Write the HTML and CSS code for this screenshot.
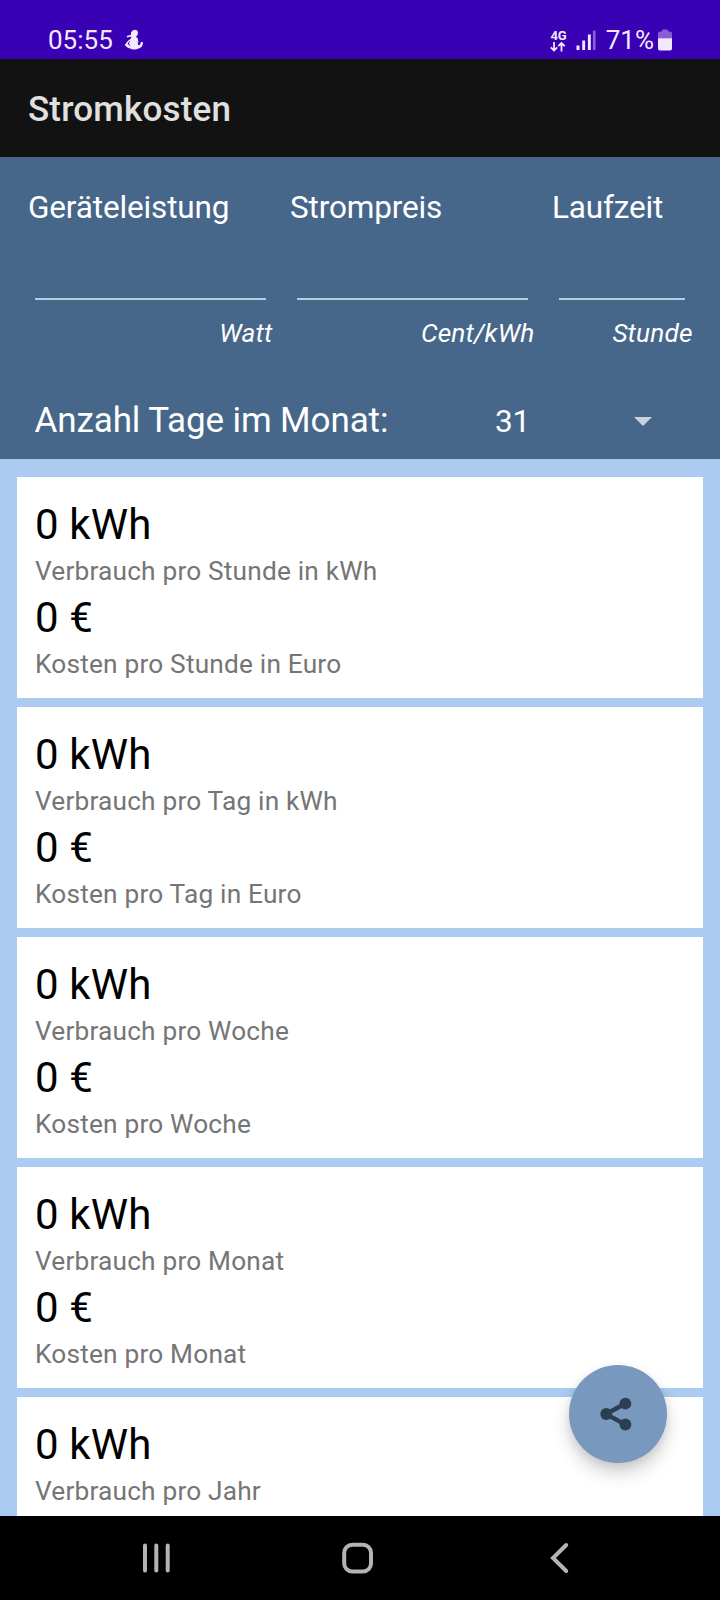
FILE: index.html
```html
<!DOCTYPE html>
<html lang="de">
<head>
<meta charset="utf-8">
<title>Stromkosten</title>
<link rel="stylesheet" href="styles.css">
</head>
<body>
<div class="screen">
  <div class="status">
    <span class="clock">05:55</span>
    <svg class="notify" width="20" height="22" viewBox="0 0 20 22"><path d="M7 3.500Q8 .8 11 .8q3 .2 3 3.300 0 2.700-2 3.700 2.500 1.500 2.300 4.200 0 2-.6 3 .3 1.500 1.500 1.300 1.400-.5 1.600-3.300h2.100c.2 4-2 6.200-4.500 6.500-2 1.400-6.500 1.400-8 0C4.500 19.500 2.500 18.300.7 15.800 3 13.500 3.500 11.500 6.500 10l1-2.600-4.500 1L2.700 7 7 5.700z"/><path class="gap" d="M5.500 12.500 4.200 15l2 1.500"/></svg>
    <span class="net"><span>4G</span><svg width="16" height="10" viewBox="0 0 16 10"><path d="M4 0v8.500M.8 5.400 4 8.600 7.200 5.400M11.500 9.600V1M8.300 4.200 11.500 1l3.200 3.200"/></svg></span>
    <svg class="signal" width="20" height="20" viewBox="0 0 20 20"><path d="M.5 15.500h3V20h-3zM6.200 10.500h2.900V20H6.200zM11.900 4.500h2.900V20h-2.900z"/><path class="dim" d="M16.900.5h2.700V20h-2.700z"/></svg>
    <span class="percent">71%</span>
    <svg class="battery" width="14" height="22" viewBox="0 0 14 22"><path class="dim" d="M4 2.500V1.500Q4 .5 5 .5h4q1 0 1 1v1h2q2 0 2 2V9.500H0V4.500q0-2 2-2z"/><path d="M0 9.300h14V19.500q0 2-2 2H2q-2 0-2-2z"/></svg>
  </div>
  <header class="appbar">Stromkosten</header>
  <section class="panel">
    <div class="fields">
      <label class="field"><span>Geräteleistung</span><input class="entry"><em>Watt</em></label>
      <label class="field"><span>Strompreis</span><input class="entry"><em>Cent/kWh</em></label>
      <label class="field"><span>Laufzeit</span><input class="entry"><em>Stunde</em></label>
    </div>
    <div class="days">
      <span class="days-label">Anzahl Tage im Monat:</span>
      <span class="days-value">31</span>
      <svg width="18" height="10" viewBox="0 0 18 10"><path d="M0 0h18L9 9z"/></svg>
    </div>
  </section>
  <main class="list">
    <article class="card"><p class="value">0 kWh</p><p class="label">Verbrauch pro Stunde in kWh</p><p class="value">0 €</p><p class="label">Kosten pro Stunde in Euro</p></article>
    <article class="card"><p class="value">0 kWh</p><p class="label">Verbrauch pro Tag in kWh</p><p class="value">0 €</p><p class="label">Kosten pro Tag in Euro</p></article>
    <article class="card"><p class="value">0 kWh</p><p class="label">Verbrauch pro Woche</p><p class="value">0 €</p><p class="label">Kosten pro Woche</p></article>
    <article class="card"><p class="value">0 kWh</p><p class="label">Verbrauch pro Monat</p><p class="value">0 €</p><p class="label">Kosten pro Monat</p></article>
    <article class="card"><p class="value">0 kWh</p><p class="label">Verbrauch pro Jahr</p></article>
    <button class="fab" aria-label="Teilen"><svg width="42" height="42" viewBox="0 0 42 42"><path d="M28.400 10.600 9 21l19.400 10.600"/><circle cx="9.200" cy="21" r="5.900"/><circle cx="28.400" cy="10.600" r="5.900"/><circle cx="28.400" cy="31.500" r="5.900"/></svg></button>
  </main>
  <nav class="nav">
    <svg width="30" height="32" viewBox="0 0 30 32"><path d="M4 3.500v25M15.300 3.500v25M26.700 3.500v25"/></svg>
    <svg width="34" height="34" viewBox="0 0 34 34"><rect x="3.200" y="3.700" width="26.800" height="26.800" rx="8"/></svg>
    <svg width="20" height="32" viewBox="0 0 20 32"><path d="M16.200 3 3 16l13.200 13"/></svg>
  </nav>
</div>
</body>
</html>
```
FILE: styles.css
```css
* { box-sizing: border-box; }
body { margin: 0; font-family: Roboto, "Noto Sans", sans-serif; }
p { margin: 0; }
.screen { width: 720px; height: 1600px; display: flex; flex-direction: column; overflow: hidden; }

.status { height: 58.500px; flex: none; background: #3a00b3; color: #f3e8ff; display: flex; align-items: flex-start; padding: 0 48px; }
.status svg { fill: #f3e8ff; }
.status .dim { fill: #8a5cd6; }
.status .gap { fill: none; stroke: #3a00b3; stroke-width: 1; }
.clock, .percent { font-size: 26px; line-height: 30px; margin-top: 25px; }
.notify { margin: 29px 0 0 11px; }
.net { margin: 29px 0 0 auto; display: flex; flex-direction: column; font-size: 13px; font-weight: 700; line-height: 13px; }
.net svg { fill: none; stroke: #f3e8ff; stroke-width: 1.8; }
.signal { margin: 30px 0 0 9px; }
.percent { margin-left: 10px; }
.battery { margin: 29px 0 0 4px; }

.appbar { height: 98px; flex: none; background: #121212; color: #e0e0e0; font-size: 35px; font-weight: 500; line-height: 102px; letter-spacing: .18px; padding-left: 28px; }

.panel { height: 302.500px; flex: none; background: #466789; color: #fff; padding: 32.500px 28px 0; }
.fields { display: grid; grid-template-columns: 244px 244px 140px; column-gap: 18px; }
.field { display: flex; flex-direction: column; font-size: 31.500px; line-height: 38px; letter-spacing: -.15px; }
.entry { appearance: none; background: none; border: 0; border-bottom: 2px solid #b9cadb; margin: 0 6px 0 7px; height: 73px; width: auto; outline: none; padding: 0; border-radius: 0; }
.field:last-child .entry { margin-right: 7px; }
.field em { text-align: right; font-size: 26.250px; line-height: 30px; letter-spacing: .12px; margin: 18px -.5px 0 0; }
.days { display: flex; align-items: center; margin-top: 37px; padding: 0 40px 0 6.500px; height: 72px; }
.days-label { font-size: 35px; letter-spacing: -.1px; line-height: 42px; margin-top: -1px; }
.days-value { font-size: 31.500px; letter-spacing: -.2px; line-height: 40px; margin: 2px 104px 0 auto; }
.days svg { fill: #c8d3df; margin-top: 1px; }

.list { position: relative; flex: 1; min-height: 0; overflow: hidden; background: #abccf0; padding: 17.500px 17px 0; display: flex; flex-direction: column; gap: 8.500px; }
.card { height: 221.500px; flex: none; background: #fff; padding: 23px 18px 0; }
.value { font-size: 42px; line-height: 50px; letter-spacing: .15px; color: #000; }
.label { font-size: 26.250px; line-height: 43.300px; letter-spacing: .19px; color: #757575; }
.fab { position: absolute; right: 53px; bottom: 53px; width: 98px; height: 98px; border: 0; border-radius: 50%; padding: 0; background: #7899bd; box-shadow: 0 10px 18px rgba(0,0,0,.18), 0 3px 8px rgba(0,0,0,.08); display: flex; align-items: center; justify-content: center; }
.fab svg { fill: #2b3f53; stroke: none; }
.fab path { fill: none; stroke: #2b3f53; stroke-width: 4.500; }

.nav { height: 84px; flex: none; background: #000; display: grid; grid-template-columns: 200px 209px 20px; align-items: center; padding-left: 141px; }
.nav svg { fill: none; stroke: #b4b4b4; stroke-width: 4; stroke-linecap: round; }
```
